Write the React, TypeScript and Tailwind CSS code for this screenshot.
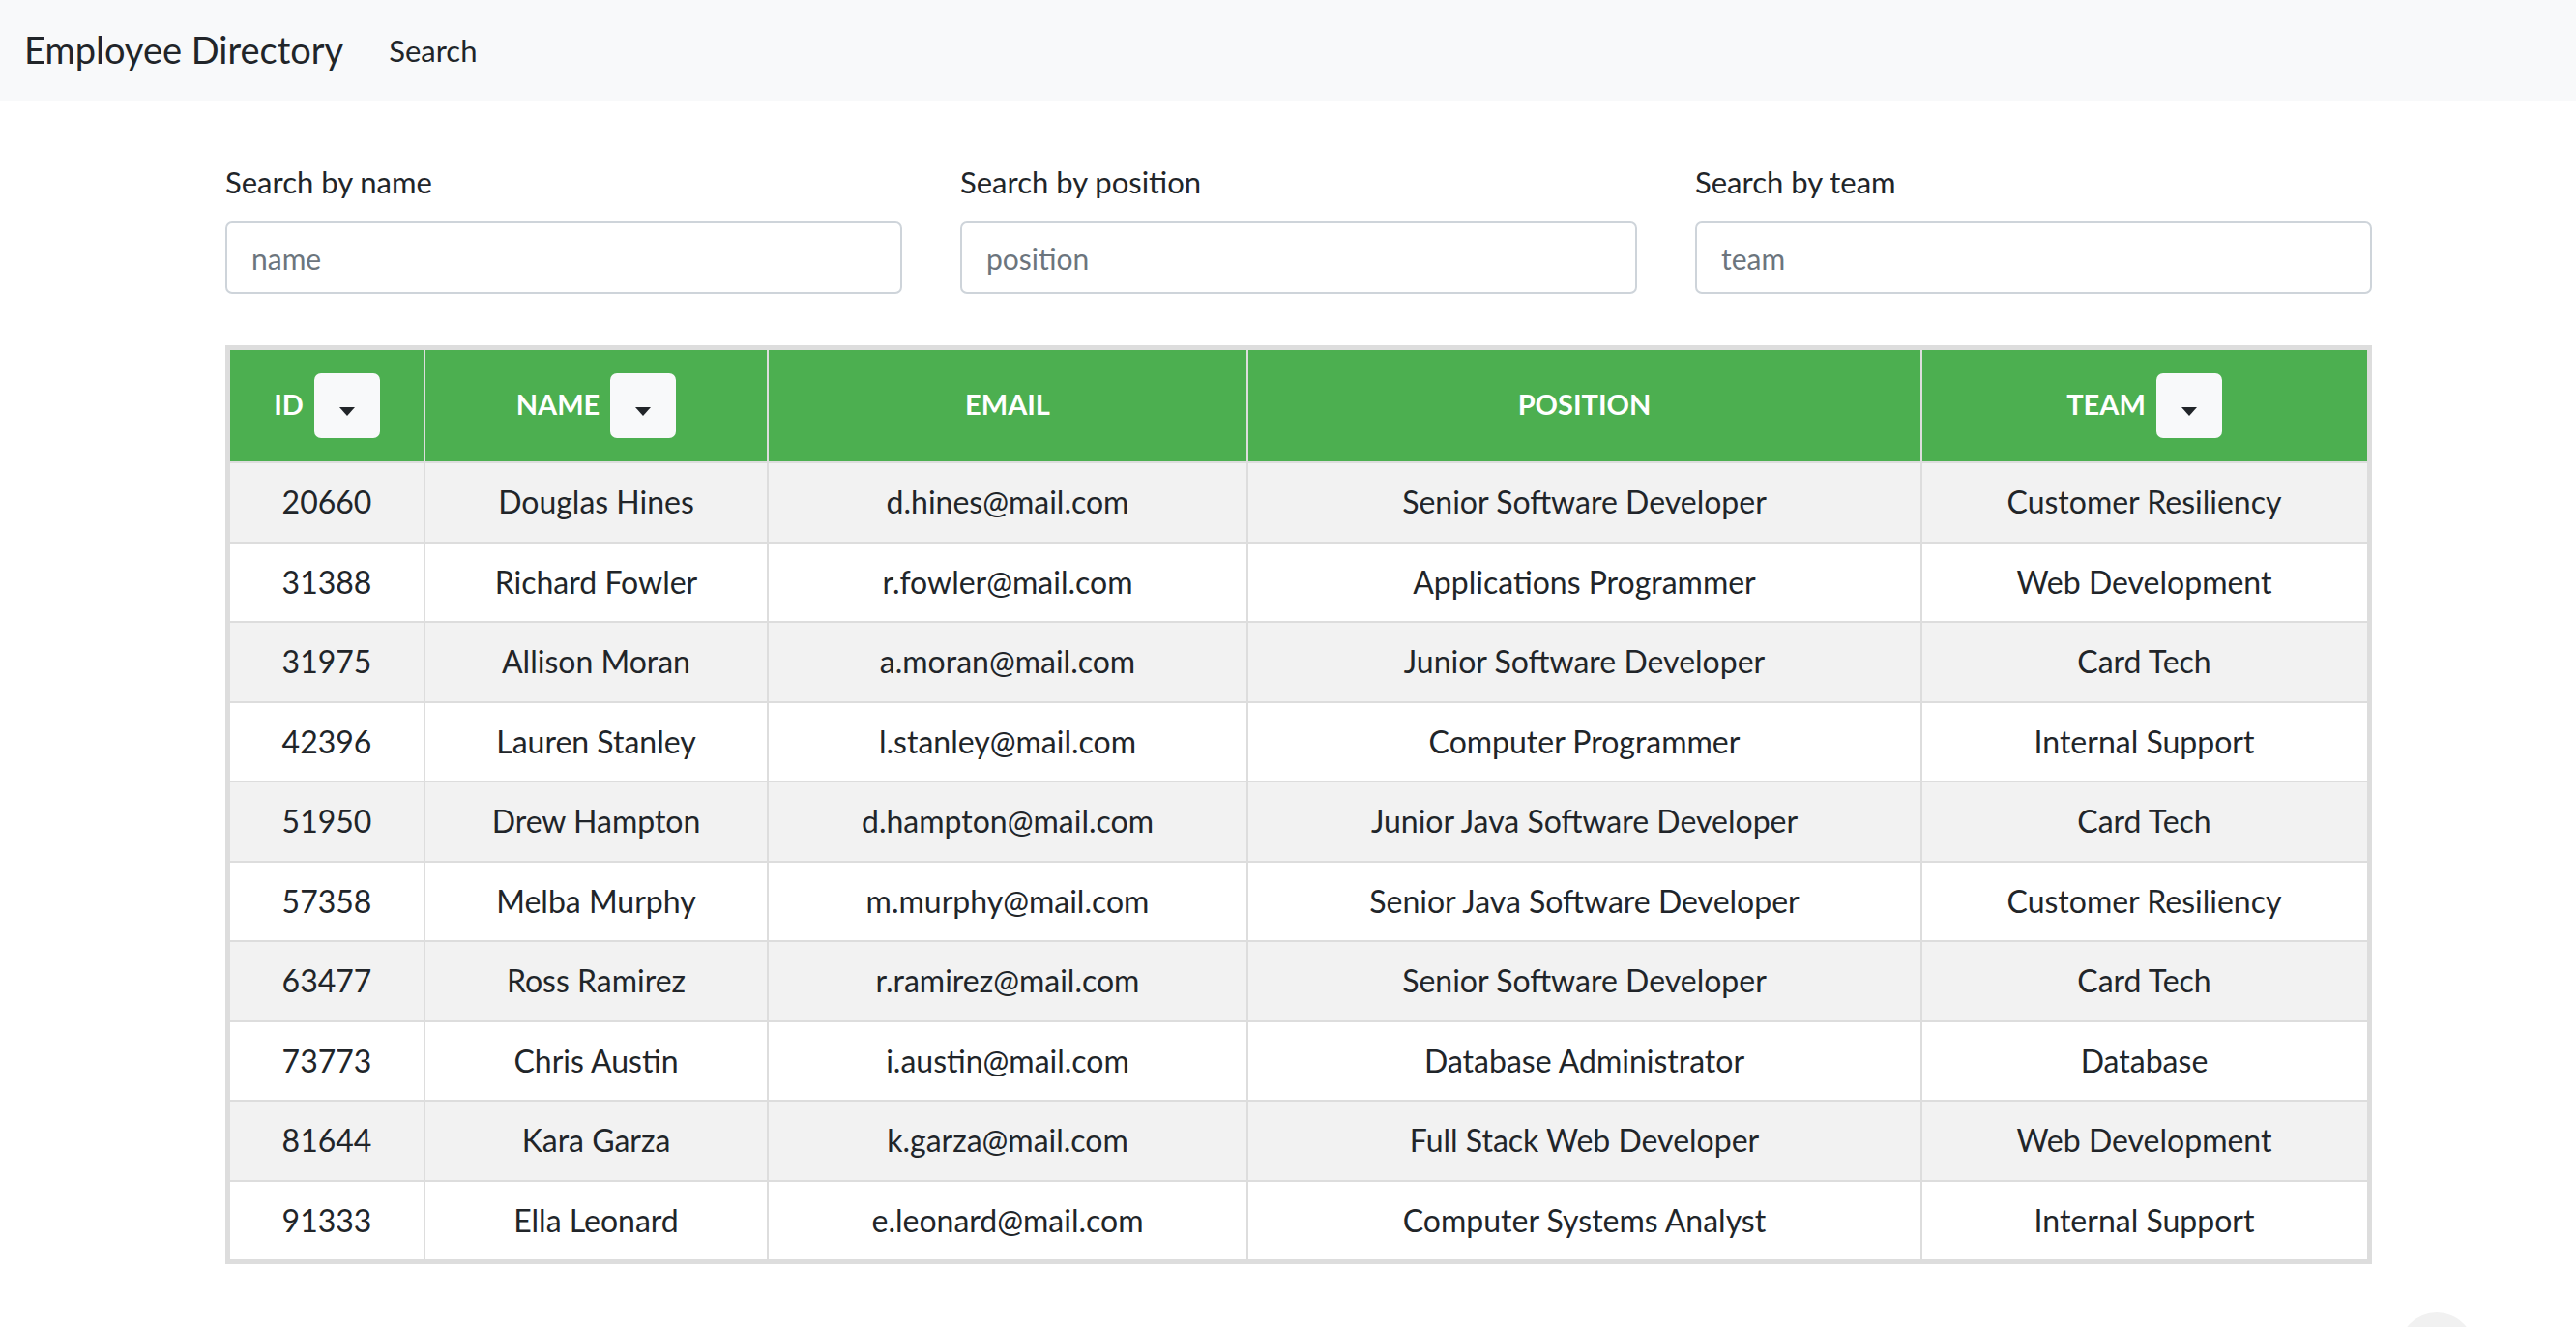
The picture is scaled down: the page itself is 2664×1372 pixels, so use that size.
import React from "react";

type Employee = {
  id: number;
  name: string;
  email: string;
  position: string;
  team: string;
};

const employees: Employee[] = [
  { id: 20660, name: "Douglas Hines", email: "d.hines@mail.com", position: "Senior Software Developer", team: "Customer Resiliency" },
  { id: 31388, name: "Richard Fowler", email: "r.fowler@mail.com", position: "Applications Programmer", team: "Web Development" },
  { id: 31975, name: "Allison Moran", email: "a.moran@mail.com", position: "Junior Software Developer", team: "Card Tech" },
  { id: 42396, name: "Lauren Stanley", email: "l.stanley@mail.com", position: "Computer Programmer", team: "Internal Support" },
  { id: 51950, name: "Drew Hampton", email: "d.hampton@mail.com", position: "Junior Java Software Developer", team: "Card Tech" },
  { id: 57358, name: "Melba Murphy", email: "m.murphy@mail.com", position: "Senior Java Software Developer", team: "Customer Resiliency" },
  { id: 63477, name: "Ross Ramirez", email: "r.ramirez@mail.com", position: "Senior Software Developer", team: "Card Tech" },
  { id: 73773, name: "Chris Austin", email: "i.austin@mail.com", position: "Database Administrator", team: "Database" },
  { id: 81644, name: "Kara Garza", email: "k.garza@mail.com", position: "Full Stack Web Developer", team: "Web Development" },
  { id: 91333, name: "Ella Leonard", email: "e.leonard@mail.com", position: "Computer Systems Analyst", team: "Internal Support" },
];

const cols = "grid grid-cols-[200px_355px_496px_697px_461px]";

function SortButton() {
  return (
    <button className="flex h-[67px] w-[68px] items-center justify-center rounded-[7px] bg-[#f8f9fa] pt-3">
      <span className="h-0 w-0 border-x-[8px] border-t-[9px] border-x-transparent border-t-[#212529]" />
    </button>
  );
}

function HeadCell({ label, sortable, first }: { label: string; sortable?: boolean; first?: boolean }) {
  return (
    <div
      className={`flex h-[115px] items-center justify-center gap-[11px] ${first ? "" : "border-l-2 border-[#dddddd]"}`}
    >
      <span className="-mt-[4px] text-[29px] font-bold uppercase text-white">{label}</span>
      {sortable && <SortButton />}
    </div>
  );
}

function SearchField({ label, placeholder }: { label: string; placeholder: string }) {
  return (
    <div className="flex w-[700px] flex-col">
      <label className="text-[31px] leading-[46px] text-[#212529]">{label}</label>
      <input
        placeholder={placeholder}
        className="mt-[18px] h-[75px] rounded-[7px] border-2 border-[#ced4da] bg-white px-[25px] text-[30px] text-[#212529] outline-none placeholder:text-[#6c757d]"
      />
    </div>
  );
}

export default function App() {
  return (
    <div className="relative h-[1372px] overflow-hidden bg-white font-['Lato',sans-serif] text-[#212529]">
      {/* Navbar */}
      <nav className="flex h-[104px] items-center bg-[#f8f9fa] pl-[25px]">
        <span className="-mt-[2px] text-[38px] text-[#212529]">Employee Directory</span>
        <a className="ml-[47px] text-[31px] text-[#212529]">Search</a>
      </nav>

      <main className="ml-[233px] w-[2220px] pt-[61px]">
        {/* Filters */}
        <div className="flex justify-between">
          <SearchField label="Search by name" placeholder="name" />
          <SearchField label="Search by position" placeholder="position" />
          <SearchField label="Search by team" placeholder="team" />
        </div>

        {/* Table */}
        <div className="mt-[53px] w-[2220px] border-[5px] border-[#dddddd]">
          <div className={`${cols} bg-[#4caf50]`}>
            <HeadCell label="ID" sortable first />
            <HeadCell label="Name" sortable />
            <HeadCell label="Email" />
            <HeadCell label="Position" />
            <HeadCell label="Team" sortable />
          </div>
          {employees.map((e, i) => (
            <div
              key={e.id}
              className={`${cols} border-t-2 border-[#dddddd] text-[32px] ${i % 2 === 0 ? "bg-[#f2f2f2]" : "bg-white"}`}
            >
              <div className="flex h-[80.5px] items-center justify-center">{e.id}</div>
              <div className="flex items-center justify-center border-l-2 border-[#dddddd]">{e.name}</div>
              <div className="flex items-center justify-center border-l-2 border-[#dddddd]">{e.email}</div>
              <div className="flex items-center justify-center border-l-2 border-[#dddddd]">{e.position}</div>
              <div className="flex items-center justify-center border-l-2 border-[#dddddd]">{e.team}</div>
            </div>
          ))}
        </div>
      </main>

      {/* scroll-to-top bubble, mostly off screen */}
      <div className="absolute left-[2481px] top-[1357px] h-[78px] w-[78px] rounded-full bg-[#f1f1f1]" />
    </div>
  );
}
